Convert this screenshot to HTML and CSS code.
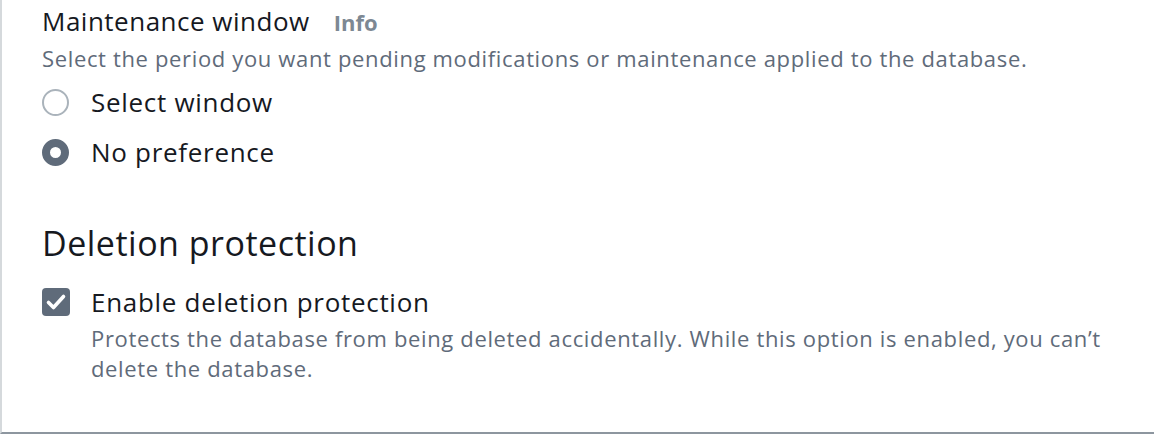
FILE: index.html
```html
<!DOCTYPE html>
<html lang="en">
<head>
<meta charset="utf-8">
<title>Maintenance</title>
<link rel="stylesheet" href="styles.css">
</head>
<body>
<div class="panel">
  <section class="field">
    <div class="label-row">
      <span class="label">Maintenance window</span>
      <span class="info">Info</span>
    </div>
    <div class="desc">Select the period you want pending modifications or maintenance applied to the database.</div>
    <div class="radios">
      <div class="radio-row">
        <span class="radio"></span>
        <span class="opt">Select window</span>
      </div>
      <div class="radio-row">
        <span class="radio checked"></span>
        <span class="opt">No preference</span>
      </div>
    </div>
  </section>
  <section class="block">
    <h2 class="heading">Deletion protection</h2>
    <div class="check-row">
      <span class="checkbox">
        <svg viewBox="0 0 28 28" width="28" height="28"><path d="M6.5 14.5 L11.5 19.5 L21.5 8.5" fill="none" stroke="#fff" stroke-width="3.6" stroke-linecap="round" stroke-linejoin="round"/></svg>
      </span>
      <div class="check-text">
        <div class="opt">Enable deletion protection</div>
        <div class="desc sub">Protects the database from being deleted accidentally. While this option is enabled, you can’t delete the database.</div>
      </div>
    </div>
  </section>
</div>
</body>
</html>
```

FILE: styles.css
```css
html, body {
  margin: 0;
  padding: 0;
  background: #ffffff;
}
body {
  font-family: "Open Sans", "Noto Sans", "Liberation Sans", sans-serif;
  color: #16191f;
}
.panel {
  height: 434px;
  box-sizing: border-box;
  border-left: 2px solid #d5d9dc;
  border-bottom: 2px solid #8d969f;
  box-shadow: 0 2px 2px rgba(0,0,0,0.12);
  padding: 2px 0 0 40px;
}
.label-row {
  display: flex;
  align-items: baseline;
  gap: 24px;
  height: 38px;
  line-height: 38px;
}
.label {
  font-size: 26px;
  letter-spacing: 0.5px;
  color: #16191f;
}
.info {
  font-size: 22px;
  font-weight: 700;
  color: #7d8893;
}
.desc {
  font-size: 22px;
  letter-spacing: 0.65px;
  line-height: 36px;
  color: #5f6b7a;
}
.radios {
  margin-top: 1px;
  display: flex;
  flex-direction: column;
}
.radio-row {
  display: flex;
  align-items: center;
  gap: 22px;
  height: 50px;
}
.radio {
  width: 27px;
  height: 27px;
  box-sizing: border-box;
  border-radius: 50%;
  border: 2px solid #aab3bb;
  flex: none;
}
.radio.checked {
  border: 8px solid #5f6b7a;
}
.opt {
  font-size: 26px;
  letter-spacing: 0.7px;
  line-height: 36px;
  color: #16191f;
}
.radio-row .opt.short {
  letter-spacing: 0.5px;
}
.block {
  margin-top: 44px;
}
.heading {
  margin: 0;
  font-size: 34px;
  font-weight: 400;
  letter-spacing: 0.5px;
  line-height: 44px;
  color: #16191f;
}
.check-row {
  display: flex;
  gap: 21px;
  margin-top: 19px;
}
.checkbox {
  width: 28px;
  height: 28px;
  border-radius: 4px;
  background: #5f6b7a;
  flex: none;
  margin-top: 4px;
  display: flex;
}
.check-text {
  display: flex;
  flex-direction: column;
}
.desc.sub {
  margin-top: 3px;
  line-height: 30px;
  max-width: 1040px;
}
```
